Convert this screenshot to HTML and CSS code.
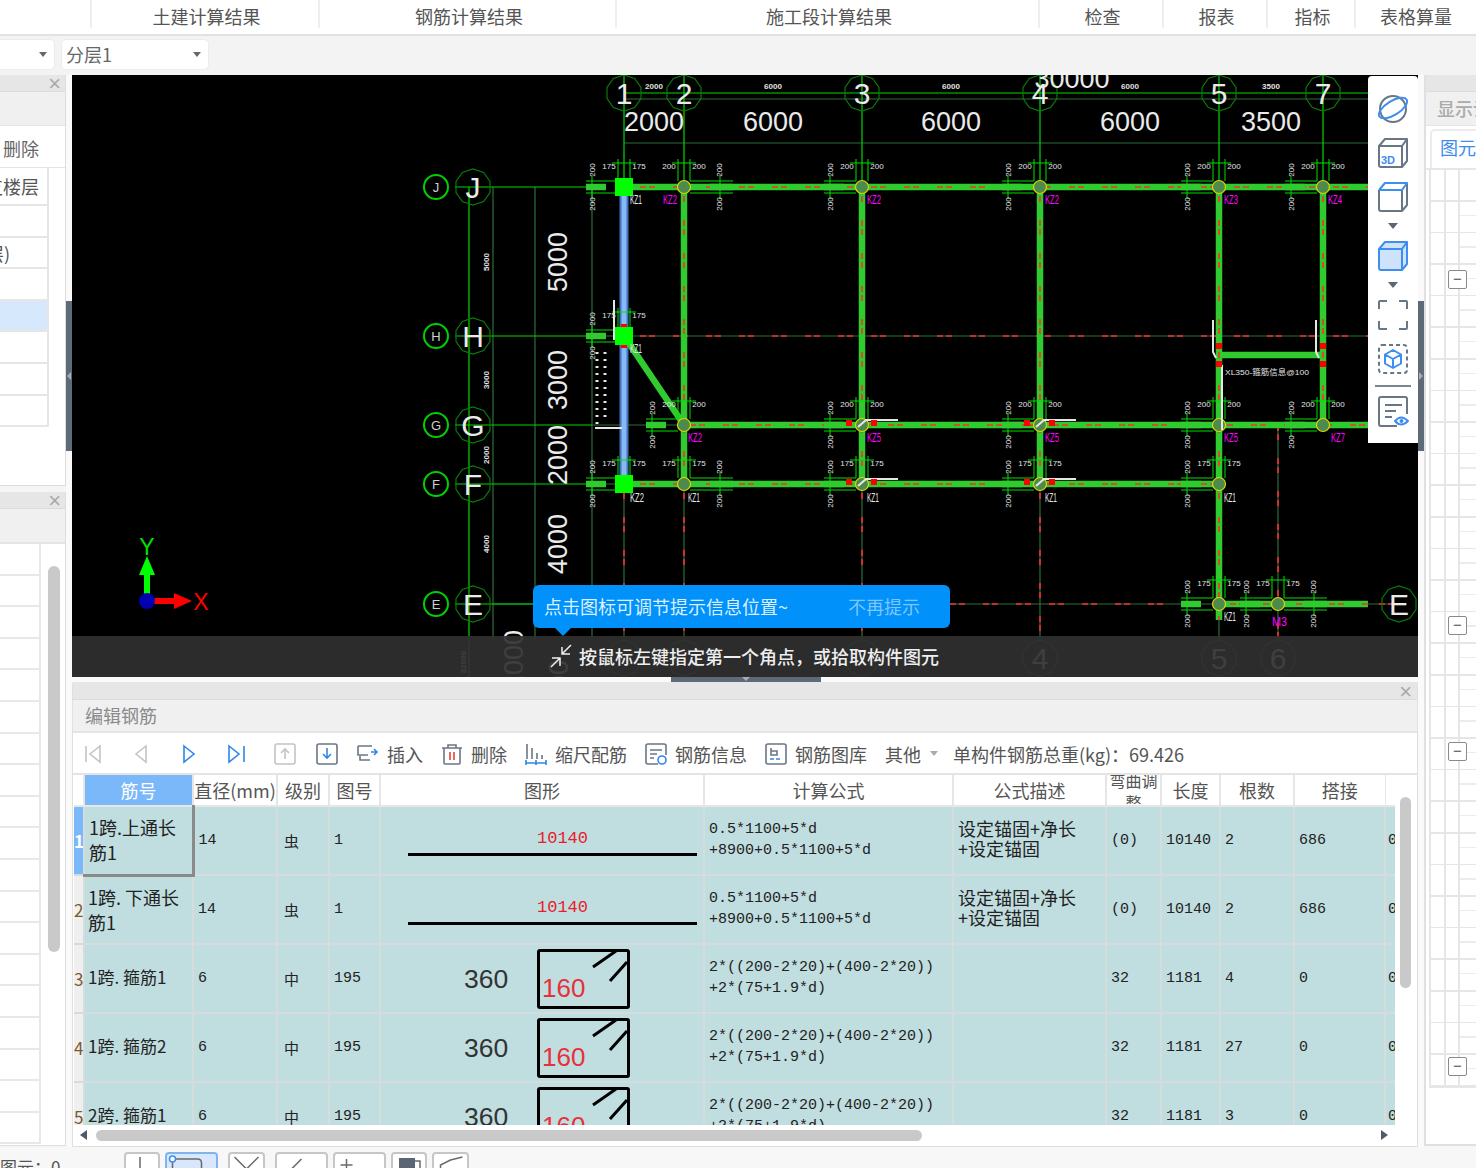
FILE: index.html
```html
<!DOCTYPE html>
<html lang="zh">
<head>
<meta charset="utf-8">
<title>编辑钢筋</title>
<link rel="stylesheet" href="styles.css">
</head>
<body>
<nav class="menu">
  <div class="tab t0"></div>
  <div class="tab t1">土建计算结果</div>
  <div class="tab t2">钢筋计算结果</div>
  <div class="tab t3">施工段计算结果</div>
  <div class="tab t4">检查</div>
  <div class="tab t5">报表</div>
  <div class="tab t6">指标</div>
  <div class="tab t7">表格算量</div>
</nav>
<div class="selects">
  <div class="select s1"><i class="caret"></i></div>
  <div class="select s2"><span>分层1</span><i class="caret"></i></div>
</div>
<main class="main">
  <aside class="left">
    <section class="panel p1">
      <header class="phead"><span class="x">×</span></header>
      <div class="ptitle"></div>
      <div class="ptool">删除</div>
      <div class="ltable">
        <div class="lrow first">支楼层</div>
        <div class="lrow"></div>
        <div class="lrow cut">(首层)</div>
        <div class="lrow"></div>
        <div class="lrow sel"></div>
        <div class="lrow"></div>
        <div class="lrow"></div>
        <div class="lrow"></div>
      </div>
    </section>
    <section class="panel p2">
      <header class="phead"><span class="x">×</span></header>
      <div class="ptitle"></div>
      <div class="lgrid"><div class="lthumb"></div></div>
    </section>
  </aside>
  <div class="vsplit"><div class="vhandle"><i class="tri-l"></i></div></div>
  <div class="center">
    <div class="canvas">
      <svg class="cad" viewBox="72 75 1346 602" width="1346" height="602" xmlns="http://www.w3.org/2000/svg">
        <defs>
          <polygon id="oct" class="oct" points="17,5.6 10.6,14.6 0,18 -10.6,14.6 -17,5.6 -17,-5.6 -10.6,-14.6 0,-18 10.6,-14.6 17,-5.6"/>
          <g id="top">
            <path class="gr" d="M-6,-28V-6M6,-28V-6M-12,-24H12"/>
            <text class="tiny" x="-15" y="-18" text-anchor="middle">200</text>
            <text class="tiny" x="15" y="-18" text-anchor="middle">200</text>
          </g>
          <g id="topn">
            <path class="gr" d="M-6,-28V-6M6,-28V-6M-12,-24H12"/>
            <text class="tiny" x="-15" y="-18" text-anchor="middle">175</text>
            <text class="tiny" x="15" y="-18" text-anchor="middle">175</text>
          </g>
          <g id="side">
            <path class="gr" d="M-38,-6H-6M-38,6H-6M-32,-12V12"/>
            <path class="beam" d="M-38,0H-18"/>
            <text class="tiny" transform="translate(-29,-17) rotate(-90)" text-anchor="middle">200</text>
            <text class="tiny" transform="translate(-29,17) rotate(-90)" text-anchor="middle">200</text>
          </g>
          <g id="sider">
            <path class="gr" d="M49,-6H6M49,6H6M36,-12V12"/>
            <path class="beam" d="M49,0H26"/>
            <text class="tiny" transform="translate(38,-17) rotate(-90)" text-anchor="middle">200</text>
            <text class="tiny" transform="translate(38,17) rotate(-90)" text-anchor="middle">200</text>
          </g>
          <g id="col"><circle class="colc" r="6.500"/></g>
          <g id="stub">
            <path class="wh" d="M-4,2 L4,-5 H36"/>
            <rect class="red" x="-16" y="-5" width="6" height="6"/>
            <rect class="red" x="9" y="-5" width="6" height="6"/>
          </g>
        </defs>

        <!-- dim grid -->
        <path class="dim" d="M592,187V640M535,187V640M493,187V640M624,484V640M684,484V640M862,484V640M1040,484V640M1219,484V640M1278,425V640M592,336H1368M592,425H684M592,484H624M492,604H1400M624,99H1368M624,143H1368"/>
        <path class="grid" d="M469,187V677M455,187H592M455,336H592M455,425H592M455,484H592M455,604H533M624,93H1368M624,75V187M684,75V187M862,75V187M1040,75V187M1219,75V187M1323,75V187"/>
        <path class="dash" d="M640,336H1368M624,484V640M684,484V640M862,484V640M1040,484V640M1278,425V640M620,604H1400"/>

        <!-- walls -->
        <path class="beam-b" d="M624,187V484"/>
        <path class="beam-bi" d="M624,187V484"/>
        <path class="beam" d="M624,187H1368M684,187V484M862,187V484M1040,187V484M1219,187V620M1323,187V425M684,425H1368M624,484H1219M1219,604H1368M1219,355H1323M624,336L684,425"/>
        <path class="dash" d="M640,187H1368M684,187V484M862,187V484M1040,187V484M1219,187V620M1323,187V425M690,425H1368M640,484H1219M1230,604H1368"/>

        <!-- tick marks -->
        <g><use href="#topn" x="624" y="187"/><use href="#topn" x="624" y="336"/><use href="#topn" x="624" y="484"/><use href="#topn" x="684" y="484"/><use href="#topn" x="862" y="484"/><use href="#topn" x="1040" y="484"/><use href="#topn" x="1219" y="484"/><use href="#topn" x="1219" y="604"/><use href="#topn" x="1278" y="604"/>
        <use href="#top" x="684" y="187"/><use href="#top" x="862" y="187"/><use href="#top" x="1040" y="187"/><use href="#top" x="1219" y="187"/><use href="#top" x="1323" y="187"/><use href="#top" x="684" y="425"/><use href="#top" x="862" y="425"/><use href="#top" x="1040" y="425"/><use href="#top" x="1219" y="425"/><use href="#top" x="1323" y="425"/></g>
        <g><use href="#side" x="624" y="187"/><use href="#side" x="624" y="336"/><use href="#side" x="624" y="484"/><use href="#side" x="862" y="187"/><use href="#side" x="1040" y="187"/><use href="#side" x="1219" y="187"/><use href="#side" x="1323" y="187"/><use href="#side" x="684" y="425"/><use href="#side" x="862" y="425"/><use href="#side" x="1040" y="425"/><use href="#side" x="1219" y="425"/><use href="#side" x="1323" y="425"/><use href="#side" x="862" y="484"/><use href="#side" x="1040" y="484"/><use href="#side" x="1219" y="484"/><use href="#side" x="1219" y="604"/><use href="#side" x="1278" y="604"/>
        <use href="#sider" x="684" y="187"/><use href="#sider" x="684" y="484"/><use href="#sider" x="1278" y="604"/></g>

        <!-- columns -->
        <rect class="sq" x="615" y="178" width="18" height="18"/>
        <rect class="sq" x="615" y="327" width="18" height="18"/>
        <rect class="sq" x="615" y="475" width="18" height="18"/>
        <rect class="red" x="621" y="324" width="6" height="3"/>
        <rect class="red" x="621" y="345" width="6" height="3"/>
        <use href="#col" x="684" y="187"/><use href="#col" x="862" y="187"/><use href="#col" x="1040" y="187"/><use href="#col" x="1219" y="187"/><use href="#col" x="1323" y="187"/>
        <use href="#col" x="684" y="425"/><use href="#col" x="862" y="425"/><use href="#col" x="1040" y="425"/><use href="#col" x="1219" y="425"/><use href="#col" x="1323" y="425"/>
        <use href="#col" x="684" y="484"/><use href="#col" x="862" y="484"/><use href="#col" x="1040" y="484"/><use href="#col" x="1219" y="484"/>
        <use href="#col" x="1219" y="604"/><use href="#col" x="1278" y="604"/>
        <use href="#stub" x="862" y="425"/><use href="#stub" x="1040" y="425"/><use href="#stub" x="862" y="484"/><use href="#stub" x="1040" y="484"/>
        <path class="wh" d="M1213,320V352L1216,358M1316,320V352L1319,358M614,300V340M595,428H622M1222,365V430"/>
        <path class="whd" d="M597,352V425M605,352V420"/>
        <rect class="red" x="1216" y="343" width="6" height="6"/><rect class="red" x="1216" y="361" width="6" height="6"/>
        <rect class="red" x="1320" y="343" width="6" height="6"/><rect class="red" x="1320" y="361" width="6" height="6"/>
        <text class="tiny" x="1225" y="375" textLength="84" lengthAdjust="spacingAndGlyphs">XL350-箍筋信息@100</text>

        <!-- labels of columns -->
        <g class="kz">
          <text x="663" y="204" textLength="14" lengthAdjust="spacingAndGlyphs">KZ2</text><text x="867" y="204" textLength="14" lengthAdjust="spacingAndGlyphs">KZ2</text><text x="1045" y="204" textLength="14" lengthAdjust="spacingAndGlyphs">KZ2</text><text x="1224" y="204" textLength="14" lengthAdjust="spacingAndGlyphs">KZ3</text><text x="1328" y="204" textLength="14" lengthAdjust="spacingAndGlyphs">KZ4</text>
          <text x="688" y="442" textLength="14" lengthAdjust="spacingAndGlyphs">KZ2</text><text x="867" y="442" textLength="14" lengthAdjust="spacingAndGlyphs">KZ5</text><text x="1045" y="442" textLength="14" lengthAdjust="spacingAndGlyphs">KZ5</text><text x="1224" y="442" textLength="14" lengthAdjust="spacingAndGlyphs">KZ5</text><text x="1331" y="442" textLength="14" lengthAdjust="spacingAndGlyphs">KZ7</text><text x="1272" y="626" textLength="15" lengthAdjust="spacingAndGlyphs">M3</text>
        </g>
        <g class="kzw">
          <text x="630" y="204" textLength="12" lengthAdjust="spacingAndGlyphs">KZ1</text><text x="630" y="353" textLength="12" lengthAdjust="spacingAndGlyphs">KZ1</text><text x="630" y="502" textLength="14" lengthAdjust="spacingAndGlyphs">KZ2</text><text x="688" y="502" textLength="12" lengthAdjust="spacingAndGlyphs">KZ1</text><text x="867" y="502" textLength="12" lengthAdjust="spacingAndGlyphs">KZ1</text><text x="1045" y="502" textLength="12" lengthAdjust="spacingAndGlyphs">KZ1</text><text x="1224" y="502" textLength="12" lengthAdjust="spacingAndGlyphs">KZ1</text><text x="1224" y="621" textLength="12" lengthAdjust="spacingAndGlyphs">KZ1</text>
        </g>

        <!-- axis bubbles top -->
        <g class="big">
          <use href="#oct" x="624" y="93"/><text x="624" y="104">1</text>
          <use href="#oct" x="684" y="93"/><text x="684" y="104">2</text>
          <use href="#oct" x="862" y="93"/><text x="862" y="104">3</text>
          <use href="#oct" x="1040" y="93"/><text x="1040" y="104">4</text>
          <use href="#oct" x="1219" y="93"/><text x="1219" y="104">5</text>
          <use href="#oct" x="1323" y="93"/><text x="1323" y="104">7</text>
          <use href="#oct" x="473" y="187"/><text x="473" y="198">J</text>
          <use href="#oct" x="473" y="336"/><text x="473" y="347">H</text>
          <use href="#oct" x="473" y="425"/><text x="473" y="436">G</text>
          <use href="#oct" x="473" y="484"/><text x="473" y="495">F</text>
          <use href="#oct" x="473" y="604"/><text x="473" y="615">E</text>
          <use href="#oct" x="1399" y="604"/><text x="1399" y="615">E</text>
          <use href="#oct" x="1040" y="658"/><text x="1040" y="669">4</text>
          <use href="#oct" x="1219" y="658"/><text x="1219" y="669">5</text>
          <use href="#oct" x="1278" y="658"/><text x="1278" y="669">6</text>
          <use href="#oct" x="624" y="658"/><use href="#oct" x="684" y="658"/><use href="#oct" x="862" y="658"/>
        </g>
        <g class="small">
          <circle cx="436" cy="187" r="12"/><text x="436" y="192">J</text>
          <circle cx="436" cy="336" r="12"/><text x="436" y="341">H</text>
          <circle cx="436" cy="425" r="12"/><text x="436" y="430">G</text>
          <circle cx="436" cy="484" r="12"/><text x="436" y="489">F</text>
          <circle cx="436" cy="604" r="12"/><text x="436" y="609">E</text>
        </g>
        <g class="dimt">
          <text x="654" y="131">2000</text><text x="773" y="131">6000</text><text x="951" y="131">6000</text><text x="1130" y="131">6000</text><text x="1271" y="131">3500</text><text x="1072" y="88">30000</text>
          <text transform="translate(567,262) rotate(-90)">5000</text>
          <text transform="translate(567,380) rotate(-90)">3000</text>
          <text transform="translate(567,455) rotate(-90)">2000</text>
          <text transform="translate(567,544) rotate(-90)">4000</text>
          <text transform="translate(523,660) rotate(-90)">2000</text>
          <text transform="translate(568,690) rotate(-90)">4000</text>
        </g>
        <g class="mini">
          <text x="654" y="89">2000</text><text x="773" y="89">6000</text><text x="951" y="89">6000</text><text x="1130" y="89">6000</text><text x="1271" y="89">3500</text>
          <text transform="translate(489,262) rotate(-90)">5000</text>
          <text transform="translate(489,380) rotate(-90)">3000</text>
          <text transform="translate(489,455) rotate(-90)">2000</text>
          <text transform="translate(489,544) rotate(-90)">4000</text>
          <text transform="translate(466,662) rotate(-90)">32000</text>
        </g>

        <!-- coordinate axes -->
        <path class="ax-y" d="M147,601V570"/><polygon class="ax-y-f" points="147,556 155,575 139,575"/>
        <path class="ax-x" d="M147,601H176"/><polygon class="ax-x-f" points="192,601 174,593 174,609"/>
        <circle class="ax-o" cx="147" cy="601" r="8"/>
        <text class="ax-yt" x="147" y="555">Y</text>
        <text class="ax-xt" x="201" y="610">X</text>
      </svg>
      <div class="cmdbar">
        <svg class="cmdicon" viewBox="0 0 24 24" width="24" height="24"><path d="M22,1L13,10M13,3V10H21M2,23L11,14M3,14H11V22"/></svg>
        <span>按鼠标左键指定第一个角点，或拾取构件图元</span>
      </div>
      <div class="tip"><span>点击图标可调节提示信息位置~</span><span class="tip-off">不再提示</span><i class="tip-arrow"></i></div>
      <div class="viewbar">
        <svg class="vi" viewBox="0 0 32 32"><circle class="st" cx="16" cy="16" r="13"/><ellipse class="st-b" cx="16" cy="15" rx="16" ry="7" transform="rotate(-32 16 15)"/></svg>
        <svg class="vi" viewBox="0 0 32 32"><path class="st" d="M2,9L8,2H30V24L25,30H4Q2,30 2,28ZM2,9H25V30M25,9L30,2"/><text class="t3d" x="4" y="27">3D</text></svg>
        <svg class="vi" viewBox="0 0 32 32"><path class="st" d="M2,9V28Q2,30 4,30H25V9M25,30L30,24V2"/><path class="st-b" d="M2,9L8,2H30L25,9H2"/></svg>
        <i class="down"></i>
        <svg class="vi" viewBox="0 0 32 32"><path class="cube-b" d="M2,9L8,2H30V24L25,30H4Q2,30 2,28Z"/><path class="st-b" d="M2,9H25V30M25,9L30,2"/></svg>
        <i class="down"></i>
        <svg class="vi" viewBox="0 0 32 32"><path class="st" d="M2,10V3Q2,2 3,2H10M22,2H29Q30,2 30,3V10M30,22V29Q30,30 29,30H22M10,30H3Q2,30 2,29V22"/></svg>
        <svg class="vi" viewBox="0 0 32 32"><rect class="st-d" x="2" y="2" width="28" height="28" rx="3"/><path class="st-b" d="M16,7L24,11.5V20.5L16,25L8,20.5V11.5ZM8,11.5L16,16L24,11.5M16,16V25"/></svg>
        <i class="vsep"></i>
        <svg class="vi" viewBox="0 0 32 32"><path class="st" d="M20,30H4Q2,30 2,28V3Q2,1 4,1H28Q30,1 30,3V18M8,9H25M8,15H19M8,21H15"/><path class="st-b" d="M18,25Q24,18 31,25Q24,32 18,25Z"/><circle class="dot-b" cx="24.500" cy="25" r="2"/></svg>
      </div>
    </div>
    <div class="hsplit"><div class="hhandle"><i class="tri-d"></i></div></div>
    <section class="editor">
      <header class="phead wide"><span class="x">×</span></header>
      <div class="etitle">编辑钢筋</div>
      <div class="etool">
        <svg class="ti" viewBox="0 0 22 22"><path class="ic-g" d="M4,3V19M18,3L8,11L18,19Z"/></svg>
        <svg class="ti m26" viewBox="0 0 22 22"><path class="ic-g" d="M16,3L6,11L16,19Z"/></svg>
        <svg class="ti m26" viewBox="0 0 22 22"><path class="ic-b" d="M6,3L16,11L6,19Z"/></svg>
        <svg class="ti m26" viewBox="0 0 22 22"><path class="ic-b" d="M3,3L13,11L3,19ZM18,3V19"/></svg>
        <svg class="ti m26" viewBox="0 0 22 22"><rect class="ic-g" x="1" y="1" width="20" height="20" rx="2"/><path class="ic-g" d="M11,16V6M7,10L11,6L15,10"/></svg>
        <svg class="ti m20" viewBox="0 0 22 22"><rect class="ic-d" x="1" y="1" width="20" height="20" rx="2"/><path class="ic-b" d="M11,5V15M7,11L11,15L15,11"/></svg>
        <div class="act a1"><svg class="ti" viewBox="0 0 22 22"><path class="ic-d" d="M1,3H15M1,3V12H11M3,13V17H13"/><path class="ic-b" d="M14,9H20M17,6L20,9L17,12"/></svg>插入</div>
        <div class="act"><svg class="ti" viewBox="0 0 22 22"><path class="ic-d" d="M1,5H21M7,5V2H15V5M3,5V20Q3,21 4,21H18Q19,21 19,20V5"/><path class="ic-r" d="M9,9V17M13,9V17"/></svg>删除</div>
        <div class="act"><svg class="ti" viewBox="0 0 22 22"><path class="ic-d" d="M2,1V16M7,5V16M12,10V16M17,12V16"/><path class="ic-b" d="M1,20H21M1,17V22M11,17V22M21,17V22"/></svg>缩尺配筋</div>
        <div class="act"><svg class="ti" viewBox="0 0 22 22"><path class="ic-d" d="M13,21H3Q1,21 1,19V3Q1,1 3,1H19Q21,1 21,3V12M5,7H17M5,11H12M5,15H9"/><circle class="ic-b" cx="17" cy="17" r="4"/></svg>钢筋信息</div>
        <div class="act"><svg class="ti" viewBox="0 0 22 22"><rect class="ic-d" x="1" y="1" width="20" height="20" rx="2"/><path class="ic-d" d="M6,5V12H12V8H6"/><path class="ic-bd" d="M5,16H17"/></svg>钢筋图库</div>
        <div class="act">其他<i class="caret grey"></i></div>
        <div class="total">单构件钢筋总重(kg)：69.426</div>
      </div>
      <div class="body">
        <div class="twrap">
          <table class="rebar">
            <colgroup><col class="c0"><col class="c1"><col class="c2"><col class="c3"><col class="c4"><col class="c5"><col class="c6"><col class="c7"><col class="c8"><col class="c9"><col class="c10"><col class="c11"><col class="c12"></colgroup>
            <thead>
              <tr><th class="corner"></th><th class="hsel">筋号</th><th>直径(mm)</th><th>级别</th><th>图号</th><th>图形</th><th>计算公式</th><th>公式描述</th><th class="wrap"><div><span>弯曲调整</span></div></th><th>长度</th><th>根数</th><th>搭接</th><th></th></tr>
            </thead>
            <tbody>
              <tr>
                <td class="no sel">1</td><td class="name cur">1跨.上通长筋1</td><td class="m">14</td><td class="lv">虫</td><td class="m">1</td>
                <td><div class="bar"><span>10140</span></div></td>
                <td class="m f">0.5*1100+5*d<br>+8900+0.5*1100+5*d</td><td class="d">设定锚固+净长<br>+设定锚固</td><td class="m">(0)</td><td class="m">10140</td><td class="m">2</td><td class="m">686</td><td class="m c">0</td>
              </tr>
              <tr>
                <td class="no">2</td><td class="name">1跨. 下通长筋1</td><td class="m">14</td><td class="lv">虫</td><td class="m">1</td>
                <td><div class="bar"><span>10140</span></div></td>
                <td class="m f">0.5*1100+5*d<br>+8900+0.5*1100+5*d</td><td class="d">设定锚固+净长<br>+设定锚固</td><td class="m">(0)</td><td class="m">10140</td><td class="m">2</td><td class="m">686</td><td class="m c">0</td>
              </tr>
              <tr>
                <td class="no">3</td><td class="name s">1跨. 箍筋1</td><td class="m">6</td><td class="lv">中</td><td class="m">195</td>
                <td><div class="hoop"><span class="h360">360</span><div class="hbox"><span>160</span><svg class="slash" viewBox="0 0 87 54"><path d="M53,15L76,-1M70,29L87,10"/></svg></div></div></td>
                <td class="m f">2*((200-2*20)+(400-2*20))<br>+2*(75+1.9*d)</td><td></td><td class="m">32</td><td class="m">1181</td><td class="m">4</td><td class="m">0</td><td class="m c">0</td>
              </tr>
              <tr>
                <td class="no">4</td><td class="name s">1跨. 箍筋2</td><td class="m">6</td><td class="lv">中</td><td class="m">195</td>
                <td><div class="hoop"><span class="h360">360</span><div class="hbox"><span>160</span><svg class="slash" viewBox="0 0 87 54"><path d="M53,15L76,-1M70,29L87,10"/></svg></div></div></td>
                <td class="m f">2*((200-2*20)+(400-2*20))<br>+2*(75+1.9*d)</td><td></td><td class="m">32</td><td class="m">1181</td><td class="m">27</td><td class="m">0</td><td class="m c">0</td>
              </tr>
              <tr>
                <td class="no">5</td><td class="name s">2跨. 箍筋1</td><td class="m">6</td><td class="lv">中</td><td class="m">195</td>
                <td><div class="hoop"><span class="h360">360</span><div class="hbox"><span>160</span><svg class="slash" viewBox="0 0 87 54"><path d="M53,15L76,-1M70,29L87,10"/></svg></div></div></td>
                <td class="m f">2*((200-2*20)+(400-2*20))<br>+2*(75+1.9*d)</td><td></td><td class="m">32</td><td class="m">1181</td><td class="m">3</td><td class="m">0</td><td class="m c">0</td>
              </tr>
            </tbody>
          </table>
        </div>
        <div class="vthumb"></div>
      </div>
      <div class="hbar"><i class="ar-l"></i><div class="hthumb"></div><i class="ar-r"></i></div>
    </section>
  </div>
  <div class="vsplit right"><div class="vhandle"><i class="tri-r"></i></div></div>
  <aside class="rightp">
    <header class="phead"></header>
    <div class="ptitle rt">显示设置</div>
    <div class="tabs"><div class="rtab">图元显示</div></div>
    <div class="tree">
      <span class="tg g1">−</span><span class="tg g2">−</span><span class="tg g3">−</span><span class="tg g4">−</span>
    </div>
  </aside>
</main>
<footer class="status">
  <div class="stext">图元：0</div>
  <div class="sb w36 g-first"><svg viewBox="0 0 32 16"><path d="M14,2V16"/></svg></div>
  <div class="sb w53 on"><svg viewBox="0 0 48 16"><path d="M5,4H30Q34,4 34,8V16M5,4V16"/><circle class="sb-dot" cx="5" cy="4" r="3"/></svg></div>
  <div class="sb w37 g10"><svg viewBox="0 0 32 16"><path d="M4,2L16,14L28,2"/></svg></div>
  <div class="sb w53 g10"><svg viewBox="0 0 48 16"><path d="M24,4L12,16"/></svg></div>
  <div class="sb w53"><svg viewBox="0 0 48 16"><path d="M11,4V16M5,10H17"/></svg></div>
  <div class="sb w36"><svg viewBox="0 0 32 16"><rect class="sb-fill" x="6" y="3" width="16" height="14"/><path d="M22,6H27V16"/></svg></div>
  <div class="sb w37"><svg viewBox="0 0 32 16"><path d="M6,16V10L16,5L28,2"/></svg></div>
</footer>
</body>
</html>
```

FILE: styles.css
```css
* { box-sizing: border-box; }
html, body { margin: 0; padding: 0; }
body {
  width: 1476px;
  height: 1168px;
  overflow: hidden;
  background: #f5f5f5;
  color: #555;
  font-family: "Noto Sans CJK SC", "Liberation Sans", sans-serif;
  font-size: 18px;
}
i { display: block; font-style: normal; }

/* top menu */
.menu { display: flex; height: 36px; background: #fff; border-bottom: 2px solid #e2e2e2; }
.tab { height: 28px; line-height: 33px; padding-left: 3px; text-align: center; border-left: 2px solid #eee; color: #555; white-space: nowrap; }
.t0 { width: 90px; border-left: 0; }
.t1 { width: 228px; }
.t2 { width: 297px; }
.t3 { width: 423px; }
.t4 { width: 124px; }
.t5 { width: 104px; }
.t6 { width: 88px; }
.t7 { width: 122px; padding-left: 0; }

.selects { display: flex; height: 39px; padding-top: 3px; background: #f3f3f3; gap: 6px; }
.select { height: 31px; background: #fff; border: 1px solid #ececec; border-radius: 5px; display: flex; align-items: center; padding: 0 7px 0 4px; color: #666; line-height: 29px; }
.s1 { width: 65px; margin-left: -10px; }
.s2 { width: 148px; }
.caret { width: 0; height: 0; margin-left: auto; border: 4px solid transparent; border-top: 5px solid #666; border-bottom: 0; }
.caret.grey { border-top-color: #aaa; margin-left: 1px; }

/* main */
.main { display: flex; height: 1072px; }
.left { width: 66px; display: flex; flex-direction: column; gap: 6px; height: 1071px; }
.panel { background: #fff; border-right: 1px solid #ddd; border-bottom: 1px solid #ddd; }
.p1 { height: 411px; }
.p2 { height: 654px; }
.phead { height: 17px; background: #e6e6e6; border-bottom: 1px solid #dcdcdc; position: relative; }
.x { position: absolute; right: 4px; top: -1px; font: 22px/20px "Liberation Sans", sans-serif; color: #a9a9a9; }
.ptitle { height: 34px; background: #f0f0f0; border-bottom: 1px solid #e4e4e4; }
.ptool { height: 42px; line-height: 44px; padding-left: 3px; border-bottom: 1px solid #e4e4e4; color: #666; white-space: nowrap; }
.ltable { width: 49px; border-right: 2px solid #e6e6e6; }
.lrow { height: 31.6px; border-bottom: 2px solid #e6e6e6; display: flex; justify-content: flex-end; overflow: hidden; white-space: nowrap; line-height: 30px; padding-right: 8px; }
.lrow.first { height: 38px; line-height: 36px; }
.lrow.cut { padding-right: 37px; }
.lrow.sel { background: #d6e9fc; }
.lgrid {
  height: 601px; position: relative;
  background-image:
    linear-gradient(#fff, #fff),
    repeating-linear-gradient(180deg, transparent 0, transparent 29.6px, #e8e8e8 29.6px, #e8e8e8 31.6px);
  background-size: 26px 100%, 100% 100%;
  background-position: 40px 0, 0 0;
  background-repeat: no-repeat;
  border-top: 1px solid #e4e4e4;
}
.lgrid::before { content: ""; display: block; width: 2px; height: 100%; margin-left: 39px; background: #e8e8e8; }
.lthumb { position: absolute; left: 48px; top: 22px; width: 12px; height: 386px; border-radius: 6px; background: #c9c9c9; }

.vsplit { width: 6px; height: 1072px; background: #fafafa; position: relative; }
.vhandle { position: absolute; top: 226px; left: 0; width: 6px; height: 150px; background: #5f6a78; display: flex; align-items: center; justify-content: center; }
.tri-l, .tri-r { width: 0; height: 0; border: 4px solid transparent; }
.tri-l { border-right: 4px solid #aab; border-left: 0; }
.tri-r { border-left: 4px solid #aab; border-right: 0; }

.center { width: 1346px; }
.canvas { height: 602px; background: #000; position: relative; overflow: hidden; }
.cad { display: block; }

/* cad drawing */
.grid { stroke: #00d800; stroke-width: 1.2; fill: none; }
.dim { stroke: #2a6f3c; stroke-width: 1.2; fill: none; }
.dash { stroke: #ff2c2c; stroke-width: 1.6; fill: none; stroke-dasharray: 6 3 6 18; }
.beam { stroke: #2fcb2f; stroke-width: 6.5; fill: none; }
.beam-b { stroke: #3e74c4; stroke-width: 9; fill: none; }
.beam-bi { stroke: #8ab8f0; stroke-width: 5; fill: none; }
.gr { stroke: #00e000; stroke-width: 1; fill: none; }
.tiny { fill: #e4e4e4; font: 8px "Liberation Sans", "Noto Sans CJK SC", sans-serif; }
.oct { fill: none; stroke: #0a7a0a; stroke-width: 1.2; }
.colc { fill: #4d8a4d; stroke: #d8d800; stroke-width: 1.2; }
.sq { fill: #00ff00; }
.red { fill: #ff0000; }
.wh { stroke: #e6e6e6; stroke-width: 2; fill: none; }
.whd { stroke: #e6e6e6; stroke-width: 3; fill: none; stroke-dasharray: 2 5; }
.kz text { fill: #ff00ff; font: 13px "Liberation Sans", sans-serif; }
.kzw text { fill: #e6e6e6; font: 13px "Liberation Sans", sans-serif; }
.big text { fill: #eaeaea; font: 30px "Liberation Sans", sans-serif; text-anchor: middle; }
.small circle { fill: #000; stroke: #00d000; stroke-width: 2; }
.small text { fill: #d0d0d0; font: 13px "Liberation Sans", sans-serif; text-anchor: middle; }
.dimt text { fill: #eaeaea; font: 27px "Liberation Sans", sans-serif; text-anchor: middle; }
.mini text { fill: #e0e0e0; font: bold 8px "Liberation Sans", sans-serif; text-anchor: middle; }
.ax-y { stroke: #00ff00; stroke-width: 6; }
.ax-y-f { fill: #00ff00; }
.ax-x { stroke: #ff0000; stroke-width: 6; }
.ax-x-f { fill: #ff0000; }
.ax-o { fill: #0000b0; }
.ax-yt { fill: #00e000; font: 23px "Liberation Sans", sans-serif; text-anchor: middle; }
.ax-xt { fill: #ff0000; font: 23px "Liberation Sans", sans-serif; text-anchor: middle; }

/* overlays on the canvas */
.cmdbar { position: absolute; left: 0; right: 0; bottom: 0; height: 41px; background: rgba(48, 48, 48, 0.92); display: flex; align-items: center; padding: 0 0 2px 477px; gap: 6px; color: #eee; font-weight: 500; }
.cmdicon { fill: none; stroke: #eee; stroke-width: 1.5; }
.tip { position: absolute; left: 461px; top: 510px; width: 417px; height: 43px; border-radius: 6px; background: #0091fa; color: #dcefff; display: flex; align-items: center; padding: 0 0 2px 11px; white-space: nowrap; }
.tip-off { position: absolute; left: 315px; color: #7fc6fd; }
.tip-arrow { position: absolute; left: 22px; bottom: -8px; width: 0; height: 0; border: 8px solid transparent; border-top: 8px solid #0091fa; border-bottom: 0; }
.viewbar { position: absolute; left: 1296px; top: 1px; width: 50px; height: 367px; background: #fff; border-radius: 4px 4px 0 0; display: flex; flex-direction: column; align-items: center; padding-top: 17px; }
.vi { display: block; width: 32px; height: 32px; margin-top: 12px; }
.vi:first-child { margin-top: 0; }
.st, .st-d, .st-b, .cube-b { fill: none; stroke-width: 2; stroke-linejoin: round; }
.st { stroke: #697686; }
.st-d { stroke: #697686; stroke-dasharray: 4 3; }
.st-b { stroke: #3e8ef0; }
.cube-b { stroke: #3e8ef0; fill: #cfe2fb; }
.dot-b { fill: #3e8ef0; }
.t3d { fill: #3e8ef0; font: bold 11px "Liberation Sans", sans-serif; }
.down { width: 0; height: 0; border: 5px solid transparent; border-top: 6px solid #5a6675; border-bottom: 0; margin-top: 10px; margin-bottom: -1px; }
.vsep { width: 36px; height: 2px; background: #7a8594; margin-top: 10px; }
.vsep + .vi { margin-top: 9px; }

.hsplit { height: 7px; background: #fafafa; padding-left: 599px; border-bottom: 2px solid #e6e6e6; }
.hhandle { width: 150px; height: 5px; background: #5f6a78; display: flex; justify-content: center; }
.tri-d { width: 0; height: 0; border: 4px solid transparent; border-top: 4px solid #aab; border-bottom: 0; }

/* editor */
.editor { height: 463px; background: #fff; border: 1px solid #e0e0e0; border-top: 0; }
.phead.wide { height: 16px; }
.phead.wide .x { right: 5px; top: -2px; }
.etitle { height: 33px; line-height: 31px; padding-left: 12px; background: #f0f0f0; border-bottom: 2px solid #e4e4e4; color: #8a8a8a; }
.etool { height: 42px; display: flex; align-items: center; padding: 1px 0 0 9px; border-bottom: 2px solid #e4e4e4; color: #555; white-space: nowrap; }
.ti { display: block; width: 22px; height: 22px; flex: none; }
.m26 { margin-left: 26px; }
.m20 { margin-left: 20px; }
.ic-g, .ic-b, .ic-d, .ic-r, .ic-bd { fill: none; stroke-width: 1.6; }
.ic-g { stroke: #c4c4c4; }
.ic-b { stroke: #2f86e8; }
.ic-d { stroke: #6b7684; }
.ic-r { stroke: #e8402f; }
.ic-bd { stroke: #2f86e8; stroke-dasharray: 4 2; }
.act { display: flex; align-items: center; gap: 8px; margin-left: 18px; }
.act.a1 { margin-left: 19px; }
.total { margin-left: 15px; }
.body { display: flex; height: 350px; }
.twrap { width: 1321px; height: 350px; margin-left: 1px; overflow: hidden; }
.rebar { width: 1321px; table-layout: fixed; border-collapse: collapse; }
.c0 { width: 10px; } .c1 { width: 109px; } .c2 { width: 84px; } .c3 { width: 52px; } .c4 { width: 51px; } .c5 { width: 324px; } .c6 { width: 249px; } .c7 { width: 153px; } .c8 { width: 55px; } .c9 { width: 59px; } .c10 { width: 74px; } .c11 { width: 91px; } .c12 { width: 10px; }
.rebar th { height: 31px; padding: 0; background: #fff; border-left: 2px solid #e6e6e6; border-bottom: 2px solid #e6e6e6; font-weight: 400; color: #555; overflow: hidden; white-space: nowrap; }
.rebar th.corner { border-left: 0; }
.rebar th:last-child { border-left: 1px solid #e6e6e6; }
.rebar th.hsel { background: #7ab8fa; color: #fff; }
.rebar th.wrap { white-space: normal; vertical-align: top; }
.wrap div { height: 29px; overflow: hidden; font-size: 16px; line-height: 22px; }
.wrap span { display: block; margin-top: -6px; }
.rebar td { height: 69px; padding: 0 0 0 4px; background: #c0dde0; border-left: 2px solid #d5dcdc; border-bottom: 2px solid #d5dcdc; color: #222; overflow: hidden; line-height: 21px; }
.rebar td.no { padding: 0; background: #efefef; color: #7a5a30; text-align: center; border-left: 0; font-size: 17px; }
.rebar td.no.sel { background: #7ab8fa; color: #fff; font-weight: 700; }
.rebar td.name { padding-left: 3px; font-size: 18px; line-height: 25px; }
.rebar td.name.s { font-size: 17px; padding-bottom: 5px; }
.rebar td.cur { border-right: 3px solid #8a8a8a; border-bottom: 3px solid #8a8a8a; padding-left: 4px; }
.m { font: 15px/21px "Liberation Mono", "Noto Sans CJK SC", monospace; white-space: nowrap; }
.rebar td.m { padding-left: 4px; }
.rebar td.c { padding-left: 2px; }
.rebar td.f { padding: 0 0 2px 4px; }
.rebar td.d { font-size: 18px; line-height: 20px; white-space: nowrap; padding: 0 0 6px 4px; }
.rebar td.lv { padding-left: 6px; font-size: 15px; }
.bar { margin-left: 23px; width: 289px; height: 30px; border-bottom: 3px solid #000; text-align: center; padding: 3px 0 0 20px; color: #e8202a; font: 17px/20px "Liberation Mono", monospace; }
.hoop { display: flex; align-items: center; height: 60px; padding-left: 79px; }
.h360 { width: 73px; font: 26.500px/32px "Liberation Sans", sans-serif; color: #333; }
.hbox { position: relative; width: 93px; height: 60px; border: 3px solid #000; border-radius: 3px; padding: 20px 0 0 2px; color: #e8303a; font: 26px/32px "Liberation Sans", sans-serif; }
.slash { position: absolute; left: 0; top: 0; width: 87px; height: 54px; }
.slash path { stroke: #000; stroke-width: 3; fill: none; }
.vthumb { width: 11px; height: 191px; margin: 22px 0 0 5px; border-radius: 6px; background: #c9c9c9; }
.hbar { height: 20px; display: flex; align-items: center; position: relative; }
.ar-l, .ar-r { width: 0; height: 0; border: 5px solid transparent; }
.ar-l { margin-left: 7px; border-right: 7px solid #4f5b6b; border-left: 0; }
.ar-r { margin-left: 459px; border-left: 7px solid #4f5b6b; border-right: 0; }
.hthumb { width: 826px; height: 11px; margin-left: 9px; border-radius: 6px; background: #c9c9c9; }

/* right panel */
.rightp { width: 52px; height: 1071px; background: #fff; border-left: 2px solid #e0e0e0; border-bottom: 2px solid #e0e0e0; overflow: hidden; }
.rt { line-height: 33px; padding-left: 11px; color: #aaa; font-weight: 500; white-space: nowrap; }
.tabs { height: 44px; padding: 3px 0 0 4px; border-bottom: 2px solid #e6e6e6; background: #fff; }
.rtab { height: 39px; margin-right: -60px; padding-left: 8px; border: 2px solid #ececec; border-bottom: 0; border-radius: 5px 0 0 0; color: #3d8cec; line-height: 33px; white-space: nowrap; }
.tree {
  position: relative; margin-left: 3px; height: 918px;
  border-left: 2px solid #e6e6e6; border-bottom: 2px solid #e6e6e6;
  background-image:
    linear-gradient(#e6e6e6, #e6e6e6),
    linear-gradient(#e6e6e6, #e6e6e6),
    repeating-linear-gradient(180deg, transparent 0, transparent 14.6px, #ececec 14.6px, #ececec 16px, transparent 16px, transparent 31.6px),
    repeating-linear-gradient(180deg, transparent 0, transparent 30px, #e6e6e6 30px, #e6e6e6 31.6px);
  background-size: 2px 100%, 2px 100%, 20px 100%, 100% 100%;
  background-position: 13px 0, 27px 0, 28px 30px, 0 0;
  background-repeat: no-repeat;
}
.tg { position: absolute; left: 17px; width: 19px; height: 19px; background: #fff; border: 1.500px solid #8a8a8a; border-radius: 2px; line-height: 15px; text-align: center; color: #555; font: 15px/15px "Liberation Sans", sans-serif; }
.g1 { top: 100px; }
.g2 { top: 446px; }
.g3 { top: 572px; }
.g4 { top: 887px; }

/* status */
.status { height: 21px; display: flex; overflow: hidden; align-items: flex-start; background: #f7f7f7; padding-top: 5px; position: relative; }
.stext { width: 124px; padding-top: 4px; line-height: 22px; color: #555; white-space: nowrap; font-size: 17px; }
.sb { height: 30px; border: 2px solid #c6c6c6; border-radius: 4px; background: #fff; margin-left: 5px; padding-top: 1px; }
.sb svg { display: block; width: 100%; height: 16px; fill: none; stroke: #6a6a6a; stroke-width: 1.5; }
.g-first { margin-left: 0; }
.g10 { margin-left: 10px; }
.w36 { width: 36px; }
.w37 { width: 37px; }
.w53 { width: 53px; }
.sb.on { background: #d8e7fb; border-color: #7fb4f0; }
.sb-dot { fill: #fff; stroke: #3e8ef0; }
.sb-fill { fill: #5a6675; stroke: none; }
```
